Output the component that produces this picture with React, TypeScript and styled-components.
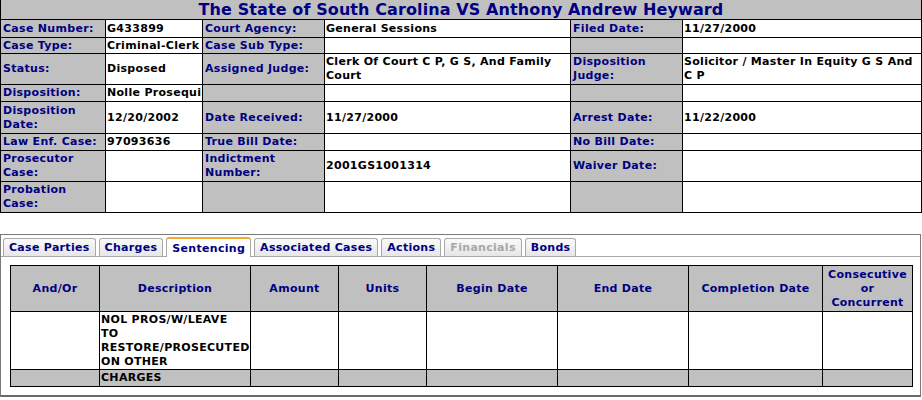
import { createGlobalStyle } from "styled-components";
import styled from "styled-components";

const GlobalStyle = createGlobalStyle`
  body {
    margin: 0;
    background: #ffffff;
    font-family: "DejaVu Sans", Verdana, sans-serif;
    font-size: 11px;
  }
`;

const Page = styled.div`
  width: 922px;
`;

const CaseTable = styled.table`
  width: 921px;
  border-collapse: collapse;
  table-layout: fixed;
  font-weight: bold;
  font-size: 11px;
  letter-spacing: 0.3px;
`;

const TitleCell = styled.th`
  background: #c0c0c0;
  color: #000080;
  font-size: 16px;
  letter-spacing: 0.1px;
  height: 19px;
  padding: 0;
  text-align: center;
  border: 1px solid #000;
  border-top: none;
  line-height: 18px;
`;

const Label = styled.td`
  background: #c0c0c0;
  color: #000080;
  border: 1px solid #000;
  padding: 0 1px 0 2px;
  vertical-align: middle;
  line-height: 14px;
`;

const Value = styled.td`
  background: #ffffff;
  color: #000;
  border: 1px solid #000;
  padding: 0 1px;
  vertical-align: middle;
  line-height: 14px;
  white-space: ${(p: { $nowrap?: boolean }) => (p.$nowrap ? "nowrap" : "normal")};
  overflow: hidden;
`;

const Row = styled.tr<{ $h: number }>`
  height: ${(p) => p.$h}px;
`;

const Panel = styled.div`
  margin-top: 21px;
  width: 919px;
  height: 158px;
  border: 1px solid #7a7a7a;
  border-bottom: 2px solid #6a6a6a;
  padding-top: 2px;
`;

const TabBar = styled.div`
  display: flex;
  gap: 3px;
  padding-left: 2px;
  border-bottom: 1px solid #a8a8a8;
  height: 19px;
  align-items: flex-end;
`;

const Tab = styled.div<{ $active?: boolean; $disabled?: boolean }>`
  height: ${(p) => (p.$active ? 18 : 17)}px;
  padding: 0 5px;
  display: flex;
  align-items: center;
  font-weight: bold;
  font-size: 11px;
  letter-spacing: 0.3px;
  color: ${(p) => (p.$disabled ? "#a8a8a8" : "#000080")};
  background: ${(p) =>
    p.$active ? "#ffffff" : "linear-gradient(#fafafa, #e6e6e6)"};
  border: 1px solid #a8a8a8;
  border-top: ${(p) => (p.$active ? "2px solid #f0a830" : "1px solid #a8a8a8")};
  border-bottom: none;
  border-radius: 3px 3px 0 0;
  margin-bottom: ${(p) => (p.$active ? "-1px" : "0")};
`;

const SentTable = styled.table`
  margin: 8px 0 0 9px;
  width: 903px;
  border-collapse: collapse;
  table-layout: fixed;
  font-weight: bold;
  font-size: 11px;
  letter-spacing: 0.3px;
`;

const HeadCell = styled.th`
  background: #c0c0c0;
  color: #000080;
  border: 1px solid #000;
  text-align: center;
  vertical-align: middle;
  padding: 0 2px;
  line-height: 14px;
  height: 45px;
`;

const BodyCell = styled.td<{ $grey?: boolean }>`
  background: ${(p) => (p.$grey ? "#c0c0c0" : "#ffffff")};
  color: #000;
  border: 1px solid #000;
  vertical-align: top;
  padding: 1px 1px 0;
  line-height: 14px;
`;

const caseRows: { h: number; cells: string[] }[] = [
  { h: 18, cells: ["Case Number:", "G433899", "Court Agency:", "General Sessions", "Filed Date:", "11/27/2000"] },
  { h: 16, cells: ["Case Type:", "Criminal-Clerk", "Case Sub Type:", "", "", ""] },
  { h: 31, cells: ["Status:", "Disposed", "Assigned Judge:", "Clerk Of Court C P, G S, And Family Court", "Disposition Judge:", "Solicitor / Master In Equity G S And C P"] },
  { h: 17, cells: ["Disposition:", "Nolle Prosequi", "", "", "", ""] },
  { h: 32, cells: ["Disposition Date:", "12/20/2002", "Date Received:", "11/27/2000", "Arrest Date:", "11/22/2000"] },
  { h: 17, cells: ["Law Enf. Case:", "97093636", "True Bill Date:", "", "No Bill Date:", ""] },
  { h: 31, cells: ["Prosecutor Case:", "", "Indictment Number:", "2001GS1001314", "Waiver Date:", ""] },
  { h: 31, cells: ["Probation Case:", "", "", "", "", ""] },
];

const caseCols = [105, 97, 122, 246, 112, 239];

const tabs = [
  { name: "Case Parties" },
  { name: "Charges" },
  { name: "Sentencing", active: true },
  { name: "Associated Cases" },
  { name: "Actions" },
  { name: "Financials", disabled: true },
  { name: "Bonds" },
];

const sentCols = [89, 151, 88, 88, 131, 131, 134, 90];
const sentHeads = [
  "And/Or",
  "Description",
  "Amount",
  "Units",
  "Begin Date",
  "End Date",
  "Completion Date",
  "Consecutive or Concurrent",
];

export default function App() {
  return (
    <Page>
      <GlobalStyle />
      <CaseTable>
        <colgroup>
          {caseCols.map((w, i) => (
            <col key={i} style={{ width: w }} />
          ))}
        </colgroup>
        <tbody>
          <tr>
            <TitleCell colSpan={6}>
              The State of South Carolina VS Anthony Andrew Heyward
            </TitleCell>
          </tr>
          {caseRows.map((r, i) => (
            <Row key={i} $h={r.h}>
              {r.cells.map((c, j) =>
                j % 2 === 0 ? (
                  <Label key={j}>{c}</Label>
                ) : (
                  <Value key={j} $nowrap={j === 1}>
                    {c}
                  </Value>
                )
              )}
            </Row>
          ))}
        </tbody>
      </CaseTable>

      <Panel>
        <TabBar>
          {tabs.map((t) => (
            <Tab key={t.name} $active={t.active} $disabled={t.disabled}>
              {t.name}
            </Tab>
          ))}
        </TabBar>
        <SentTable>
          <colgroup>
            {sentCols.map((w, i) => (
              <col key={i} style={{ width: w }} />
            ))}
          </colgroup>
          <thead>
            <tr>
              {sentHeads.map((h) => (
                <HeadCell key={h}>{h}</HeadCell>
              ))}
            </tr>
          </thead>
          <tbody>
            <Row $h={58}>
              <BodyCell />
              <BodyCell>NOL PROS/W/LEAVE TO RESTORE/PROSECUTED ON OTHER</BodyCell>
              {sentCols.slice(2).map((_, i) => (
                <BodyCell key={i} />
              ))}
            </Row>
            <Row $h={17}>
              <BodyCell $grey />
              <BodyCell $grey>CHARGES</BodyCell>
              {sentCols.slice(2).map((_, i) => (
                <BodyCell key={i} $grey />
              ))}
            </Row>
          </tbody>
        </SentTable>
      </Panel>
    </Page>
  );
}
